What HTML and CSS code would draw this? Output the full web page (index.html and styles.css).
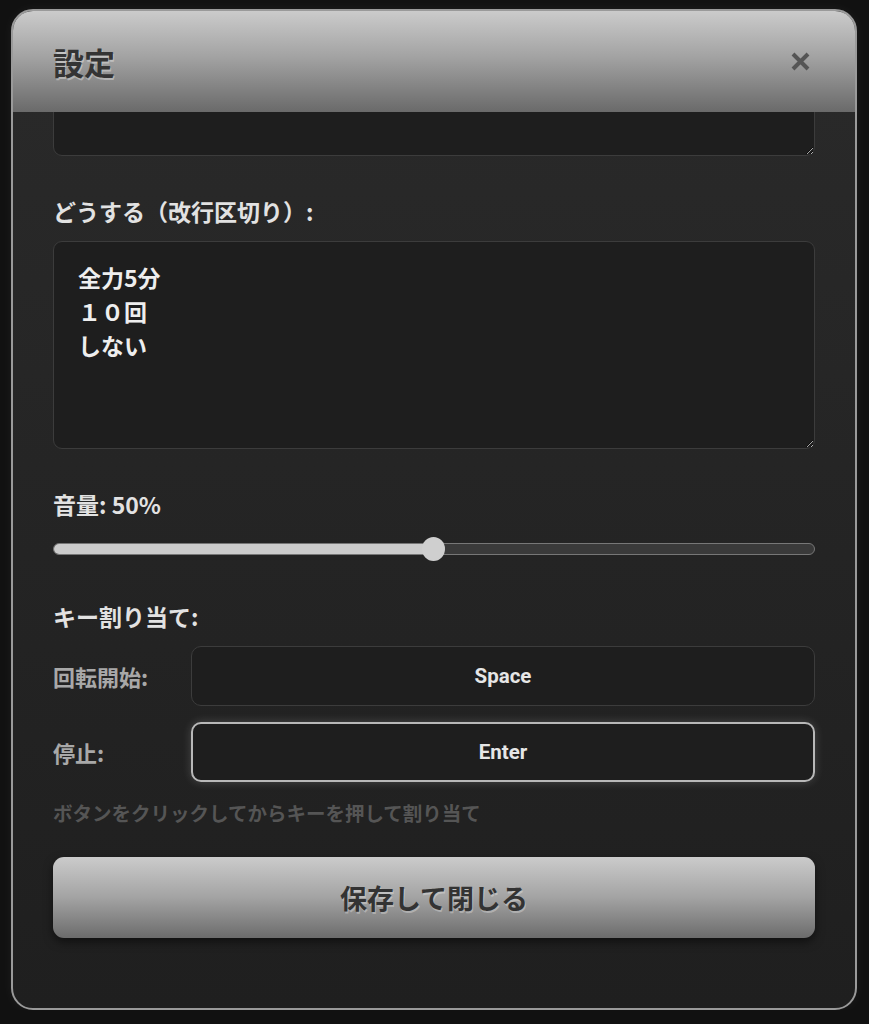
FILE: index.html
```html
<!DOCTYPE html>
<html lang="ja">
<head>
<meta charset="utf-8">
<title>設定</title>
<link rel="stylesheet" href="styles.css">
</head>
<body>
<div class="modal">
  <div class="modal-header">
    <h2 class="modal-title">設定</h2>
    <span class="close-btn" aria-label="閉じる">
      <svg width="21" height="21" viewBox="0 0 21 21"><path d="M3 3 L18 18 M18 3 L3 18" stroke="#555" stroke-width="4" stroke-linecap="butt" fill="none"/></svg>
    </span>
  </div>
  <div class="modal-body">
    <textarea class="field field-top" readonly></textarea>

    <label class="label label-gap">どうする（改行区切り）:</label>
    <textarea class="field field-main" readonly>全力5分
１０回
しない</textarea>

    <div class="label label-gap">音量: 50%</div>
    <div class="slider">
      <div class="slider-track">
        <div class="slider-fill" style="width: 50%"></div>
      </div>
      <div class="slider-thumb" style="left: 50%"></div>
    </div>

    <div class="label label-gap">キー割り当て:</div>
    <div class="key-rows">
      <div class="key-row">
        <span class="key-label">回転開始:</span>
        <button class="key-btn">Space</button>
      </div>
      <div class="key-row">
        <span class="key-label">停止:</span>
        <button class="key-btn active">Enter</button>
      </div>
    </div>
    <p class="hint">ボタンをクリックしてからキーを押して割り当て</p>

    <button class="save-btn">保存して閉じる</button>
  </div>
</div>
</body>
</html>
```

FILE: styles.css
```css
html, body {
  margin: 0;
  padding: 0;
  background: #111111;
}

body {
  padding: 9px 12px 0 11px;
  font-family: "Noto Sans CJK JP", "Noto Sans", sans-serif;
  color: #e0e0e0;
}

.modal {
  box-sizing: border-box;
  width: 846px;
  height: 1001px;
  border: 2px solid #9a9a9a;
  border-radius: 22px;
  overflow: hidden;
  display: flex;
  flex-direction: column;
  background: linear-gradient(to bottom, #2a2a2a 0%, #1f1f1f 100%);
  box-shadow: 0 0 12px rgba(255, 255, 255, 0.05);
}

.modal-header {
  height: 101px;
  flex: none;
  display: flex;
  align-items: center;
  justify-content: space-between;
  padding: 0 44px 0 40px;
  background: linear-gradient(to bottom, #cbcbcb 0%, #a3a3a3 45%, #6a6a6a 100%);
}

.modal-title {
  margin: 0;
  font-size: 31px;
  font-weight: 700;
  line-height: 36px;
  color: #343434;
  text-shadow: 1px 2px 0 rgba(255, 255, 255, 0.35);
}

.close-btn {
  display: flex;
  width: 21px;
  height: 21px;
}

.modal-body {
  flex: 1;
  overflow: hidden;
  padding: 0 40px;
  display: flex;
  flex-direction: column;
}

.field {
  box-sizing: border-box;
  display: block;
  width: 100%;
  margin: 0;
  background: #1e1e1e;
  border: 1px solid #3c3c3c;
  border-radius: 9px;
  color: #eeeeee;
  font-family: "Noto Sans CJK JP", sans-serif;
  font-weight: 700;
  font-size: 23px;
  line-height: 34px;
  padding: 18px 24px 4px;
  resize: vertical;
  outline: none;
  flex: none;
}

.field-top {
  height: 120px;
  margin-top: -76px;
}

.field-main {
  height: 208px;
  margin-top: 18px;
}

.label {
  display: block;
  font-size: 23px;
  font-weight: 700;
  line-height: 24px;
  color: #e2e2e2;
}

.label-gap {
  margin-top: 43px;
}

.slider {
  position: relative;
  margin-top: 21px;
  height: 24px;
  display: flex;
  align-items: center;
}

.slider-track {
  box-sizing: border-box;
  width: 100%;
  height: 12px;
  border-radius: 6px;
  border: 1px solid #777777;
  background: #3a3a3a;
  overflow: hidden;
}

.slider-fill {
  height: 100%;
  background: #cccccc;
}

.slider-thumb {
  position: absolute;
  top: 0;
  width: 23px;
  height: 24px;
  margin-left: -12px;
  border-radius: 50%;
  background: #cfcfcf;
}

.key-rows {
  margin-top: 18px;
  display: flex;
  flex-direction: column;
  gap: 16px;
}

.key-row {
  display: grid;
  grid-template-columns: 138px 1fr;
  align-items: center;
}

.key-label {
  font-size: 22px;
  font-weight: 700;
  color: #a8a8a8;
}

.key-btn {
  box-sizing: border-box;
  height: 60px;
  width: 100%;
  background: #1e1e1e;
  border: 1px solid #3c3c3c;
  border-radius: 10px;
  color: #e6e6e6;
  font-family: Roboto, "Noto Sans", sans-serif;
  font-weight: 700;
  font-size: 20.5px;
}

.key-btn.active {
  border: 2px solid #b8b8b8;
  box-shadow: 0 0 10px rgba(255, 255, 255, 0.18);
}

.hint {
  margin: 21px 0 0 0;
  font-size: 19.5px;
  line-height: 20px;
  font-weight: 700;
  color: #555555;
}

.save-btn {
  box-sizing: border-box;
  margin-top: 34px;
  height: 81px;
  width: 100%;
  border: none;
  border-radius: 11px;
  background: linear-gradient(to bottom, #cbcbcb 0%, #a3a3a3 50%, #6c6c6c 100%);
  color: #333333;
  font-family: "Noto Sans CJK JP", sans-serif;
  font-weight: 700;
  font-size: 27px;
  text-shadow: 1px 2px 0 rgba(255, 255, 255, 0.3);
  box-shadow: 0 4px 10px rgba(0, 0, 0, 0.5);
  flex: none;
}
```
